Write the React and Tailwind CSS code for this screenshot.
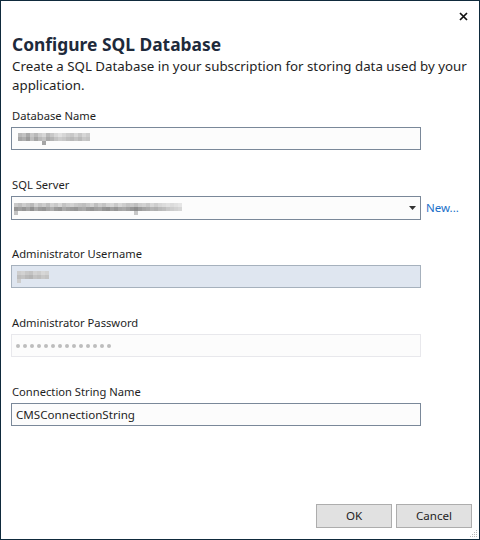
import React from "react";

const font = { fontFamily: '"Segoe UI", "Noto Sans", "Open Sans", sans-serif' };

function Blur({ rows }) {
  return (
    <div className="flex flex-col">
      {rows.map((row, i) => (
        <div key={i} className="flex">
          {row.map((c, j) => (
            <span key={j} className="block h-[4px] w-[4px]" style={{ background: c }} />
          ))}
        </div>
      ))}
    </div>
  );
}

const g = (v) => `rgb(${v},${v},${v})`;
const mk = (arr) => arr.map((v) => (v === 0 ? "transparent" : g(v)));

const dbRows = [
  mk([185, 195, 170, 200, 185, 205, 215, 185, 200, 215, 225, 215, 205, 200, 215, 200, 215, 205, 0]),
  mk([165, 175, 155, 190, 165, 185, 195, 170, 180, 195, 205, 200, 190, 185, 195, 185, 200, 195, 0]),
  mk([0, 0, 0, 0, 0, 0, 165, 0, 0, 0, 0, 0, 0, 0, 0, 0, 0, 0, 0]),
];

const srvRows = [
  mk([200, 190, 205, 195, 185, 210, 195, 205, 190, 210, 200, 215, 195, 205, 210, 200, 195, 190, 200, 210, 190, 205, 195, 210, 215, 200, 215, 205, 195, 200, 190, 205, 210, 200, 215, 205, 215, 220, 225, 220, 225, 230]),
  mk([150, 160, 150, 165, 145, 170, 155, 150, 165, 175, 155, 150, 170, 160, 155, 150, 165, 170, 155, 150, 160, 165, 150, 145, 160, 150, 165, 170, 160, 150, 140, 155, 165, 170, 180, 175, 185, 190, 200, 205, 210, 215]),
  mk([195, 0, 0, 0, 0, 0, 0, 0, 0, 0, 0, 0, 0, 0, 0, 0, 0, 0, 0, 0, 0, 0, 0, 0, 0, 0, 0, 0, 0, 0, 200, 0, 0, 0, 0, 0, 0, 0, 0, 0, 0, 0]),
];

const userRows = [
  mk([205, 210, 200, 195, 210, 205, 215, 210, 0]),
  mk([190, 195, 185, 180, 195, 190, 200, 195, 0]),
  mk([205, 0, 0, 0, 0, 0, 0, 0, 0]),
];

function Label({ children }) {
  return <div className="text-[11.2px] leading-[16px] text-[#1e1e1e] pl-[11px]">{children}</div>;
}

export default function App() {
  return (
    <div
      className="w-[480px] h-[540px] bg-white border border-[#0f2a3c] flex flex-col relative overflow-hidden"
      style={font}
    >
      <div className="absolute right-[11px] top-[11px]">
        <svg width="9" height="9" viewBox="0 0 9 9">
          <path d="M1 1 L8 8 M8 1 L1 8" stroke="#111" strokeWidth="1.7" />
        </svg>
      </div>

      <div className="pt-[31px] pl-[11px] pr-[12px]">
        <div className="text-[17.4px] leading-[24px] font-bold text-[#1e2a3b]">Configure SQL Database</div>
        <div className="text-[13.3px] leading-[19px] text-[#1e1e1e] mt-[1px]">
          Create a SQL Database in your subscription for storing data used by your application.
        </div>
      </div>

      <div className="mt-[13px]">
        <Label>Database Name</Label>
        <div className="mt-[3px] ml-[10px] w-[410px] h-[23px] border border-[#7a8899] bg-[#fcfcfc] flex items-center pl-[6px]">
          <Blur rows={dbRows} />
        </div>
      </div>

      <div className="mt-[27px]">
        <Label>SQL Server</Label>
        <div className="mt-[3px] ml-[10px] flex items-center">
          <div className="w-[410px] h-[24px] border border-[#7a8899] bg-[#fcfcfc] flex items-center pl-[2px] pr-[4px]">
            <div className="flex-1 pt-[2px]">
              <Blur rows={srvRows} />
            </div>
            <svg width="7" height="4" viewBox="0 0 7 4">
              <path d="M0 0 L7 0 L3.5 4 Z" fill="#333" />
            </svg>
          </div>
          <span className="ml-[5px] text-[11.5px] text-[#1a6fc9]">New...</span>
        </div>
      </div>

      <div className="mt-[26px]">
        <Label>Administrator Username</Label>
        <div className="mt-[3px] ml-[10px] w-[410px] h-[23px] border border-[#a6b1bd] bg-[#dfe6f0] flex items-center pl-[5px]">
          <Blur rows={userRows} />
        </div>
      </div>

      <div className="mt-[27px]">
        <Label>Administrator Password</Label>
        <div className="mt-[3px] ml-[10px] w-[410px] h-[23px] border border-[#e8e8ec] bg-[#fcfcfc] flex items-center pl-[4px] gap-[3px]">
          {Array.from({ length: 14 }).map((_, i) => (
            <span key={i} className="block w-[4px] h-[4px] rounded-full bg-[#bdbdbd]" />
          ))}
        </div>
      </div>

      <div className="mt-[27px]">
        <Label>Connection String Name</Label>
        <div className="mt-[3px] ml-[10px] w-[410px] h-[23px] border border-[#7a8899] bg-[#fcfcfc] flex items-center pl-[4px] text-[11.6px] text-[#1e1e1e]">
          CMSConnectionString
        </div>
      </div>

      <div className="flex-1" />

      <div className="flex justify-end gap-[4px] pr-[7px] pb-[11px]">
        <button className="w-[76px] h-[24px] bg-[#e1e1e1] border border-[#adadad] text-[11.6px] text-[#1e1e1e]">OK</button>
        <button className="w-[76px] h-[24px] bg-[#e1e1e1] border border-[#adadad] text-[11.6px] text-[#1e1e1e]">Cancel</button>
      </div>

      <div className="absolute right-[1px] bottom-[1px]">
        <svg width="10" height="10" viewBox="0 0 10 10">
          {[[8, 2], [6, 4], [8, 4], [4, 6], [6, 6], [8, 6], [2, 8], [4, 8], [6, 8], [8, 8]].map(([x, y], i) => (
            <rect key={i} x={x} y={y} width="1" height="1" fill="#b8b8b8" />
          ))}
        </svg>
      </div>
    </div>
  );
}
